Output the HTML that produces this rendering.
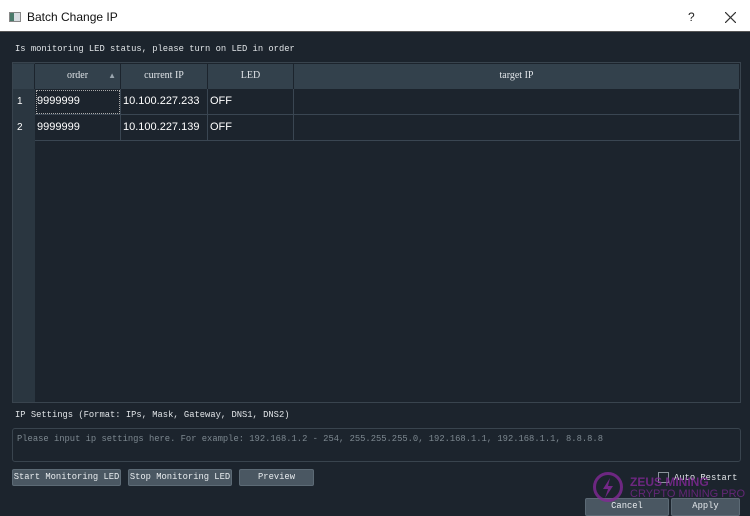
<!DOCTYPE html>
<html><head><style>
*{margin:0;padding:0;box-sizing:border-box}
body{width:750px;height:514px;overflow:hidden;background:#1c242d;font-family:"Liberation Serif","Noto Serif CJK SC",serif;position:relative;color:#e6e9ec}
.a{position:absolute}
.title{left:0;top:0;width:750px;height:32px;background:#fff;border-bottom:1px solid #555}
.mono{font-family:"Liberation Mono","Noto Sans CJK SC",monospace;font-size:8.8px;color:#dfe3e6;white-space:nowrap}
.hd{background:#33414c;color:#e0e4e8;font-size:10px;text-align:center;line-height:24px;border-right:1px solid #1c242d}
.cell{font-family:"Liberation Sans",sans-serif;font-size:11px;color:#fff;line-height:25px;padding-left:2px;border-right:1px solid #3a4652;border-bottom:1px solid #3a4652}
.btn{background:#4a5762;border:1px solid #5c6a75;border-radius:2px;font-size:8.8px;text-align:center;line-height:15px;color:#e8ecef;font-family:"Liberation Mono",monospace;white-space:nowrap}
</style></head><body>
<div class="a title">
 <div class="a" style="left:9px;top:12px;width:12px;height:10px;border:1px solid #888;background:linear-gradient(90deg,#4a7a6a 40%,#d8dde2 40%)"></div>
 <div class="a" style="left:27px;top:10px;font-family:'Liberation Sans',sans-serif;font-size:12px;color:#111">Batch Change IP</div>
 <div class="a" style="left:688px;top:10px;font-family:'Liberation Sans',sans-serif;font-size:12px;color:#222">?</div>
 <svg class="a" style="left:725px;top:12px" width="11" height="11"><path d="M0 0L11 11M11 0L0 11" stroke="#333" stroke-width="1.2"/></svg>
</div>
<div class="a mono" style="left:15px;top:44px">Is monitoring LED status, please turn on LED in order</div>
<div class="a" style="left:12px;top:62px;width:729px;height:341px;border:1px solid #39444e;background:#1c242d">
 <div class="a" style="left:0;top:0;width:22px;height:339px;background:#2a3640"></div>
 <div class="a hd" style="left:0;top:1px;width:22px;height:25px"></div>
 <div class="a hd" style="left:22px;top:1px;width:86px;height:25px">order<span style="position:absolute;right:4px;top:0;font-size:8px;color:#9aa5ae">▲</span></div>
 <div class="a hd" style="left:108px;top:1px;width:87px;height:25px">current IP</div>
 <div class="a hd" style="left:195px;top:1px;width:86px;height:25px">LED</div>
 <div class="a hd" style="left:281px;top:1px;width:446px;height:25px">target IP</div>
 <div class="a cell" style="left:0;top:26px;width:22px;height:26px;font-size:10px;padding-left:4px;background:#2a3640;border:none">1</div>
 <div class="a cell" style="left:0;top:52px;width:22px;height:26px;font-size:10px;padding-left:4px;background:#2a3640;border:none">2</div>
 <div class="a cell" style="left:22px;top:26px;width:86px;height:26px;outline:1px dotted #aaa;outline-offset:-2px">9999999</div>
 <div class="a cell" style="left:108px;top:26px;width:87px;height:26px">10.100.227.233</div>
 <div class="a cell" style="left:195px;top:26px;width:86px;height:26px">OFF</div>
 <div class="a cell" style="left:281px;top:26px;width:446px;height:26px"></div>
 <div class="a cell" style="left:22px;top:52px;width:86px;height:26px">9999999</div>
 <div class="a cell" style="left:108px;top:52px;width:87px;height:26px">10.100.227.139</div>
 <div class="a cell" style="left:195px;top:52px;width:86px;height:26px">OFF</div>
 <div class="a cell" style="left:281px;top:52px;width:446px;height:26px"></div>
</div>
<div class="a mono" style="left:15px;top:410px">IP Settings (Format: IPs, Mask, Gateway, DNS1, DNS2)</div>
<div class="a" style="left:12px;top:428px;width:729px;height:34px;border:1px solid #39444e;border-radius:3px"></div>
<div class="a mono" style="left:17px;top:434px;color:#7d8890">Please input ip settings here. For example: 192.168.1.2 - 254, 255.255.255.0, 192.168.1.1, 192.168.1.1, 8.8.8.8</div>
<div class="a btn" style="left:12px;top:469px;width:109px;height:17px">Start Monitoring LED</div>
<div class="a btn" style="left:128px;top:469px;width:104px;height:17px">Stop Monitoring LED</div>
<div class="a btn" style="left:239px;top:469px;width:75px;height:17px">Preview</div>
<div class="a" style="left:658px;top:472px;width:11px;height:11px;border:1px solid #8a949c;background:#1c242d"></div>
<div class="a mono" style="left:674px;top:473px">Auto Restart</div>
<div class="a btn" style="left:585px;top:498px;width:84px;height:18px">Cancel</div>
<div class="a btn" style="left:671px;top:498px;width:69px;height:18px">Apply</div>
<div class="a" style="left:593px;top:472px;width:30px;height:30px;border:3px solid rgba(130,40,150,.8);border-radius:50%"></div>
<svg class="a" style="left:601px;top:478px" width="14" height="20"><path d="M9 0L2 11H7L4 20L12 8H7Z" fill="rgba(130,40,150,.85)"/></svg>
<div class="a" style="left:630px;top:475px;font-family:'Liberation Sans',sans-serif;font-weight:bold;font-size:12px;color:rgba(130,40,150,.8)">ZEUS MINING</div>
<div class="a" style="left:630px;top:488px;font-family:'Liberation Sans',sans-serif;font-size:11px;color:rgba(130,40,150,.7)">CRYPTO MINING PRO</div>
</body></html>
